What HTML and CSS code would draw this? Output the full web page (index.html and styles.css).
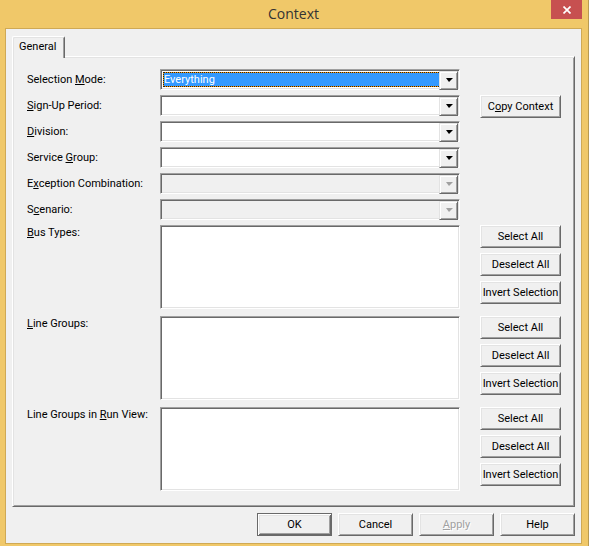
FILE: index.html
```html
<!DOCTYPE html>
<html lang="en">
<head>
    <meta charset="UTF-8">
    <meta name="viewport" content="width=device-width, initial-scale=1.0">
    <title>Context</title>
    <link rel="stylesheet" href="styles.css">
</head>
<body>
    <div class="window">
        <header class="titlebar">
            <h1>Context</h1>
            <button type="button" class="close" aria-label="Close">
                <svg width="8" height="8" viewBox="0 0 8 8"><path d="M0.5 0.5L7.5 7.5M7.5 0.5L0.5 7.5" stroke="#fff" stroke-width="1.7"/></svg>
            </button>
        </header>

        <form class="client">
            <div class="tabs" role="tablist">
                <button type="button" class="tab" role="tab" aria-selected="true">General</button>
            </div>

            <div class="panel" role="tabpanel">
                <div class="fields">
                    <label for="mode">Selection <u>M</u>ode:</label>
                    <div class="combo focused">
                        <select id="mode"><option>Everything</option></select>
                    </div>

                    <label for="period"><u>S</u>ign-Up Period:</label>
                    <div class="combo">
                        <select id="period"><option></option></select>
                    </div>
                    <button type="button" class="btn copy">C<u>o</u>py Context</button>

                    <label for="division"><u>D</u>ivision:</label>
                    <div class="combo">
                        <select id="division"><option></option></select>
                    </div>

                    <label for="service">Service <u>G</u>roup:</label>
                    <div class="combo">
                        <select id="service"><option></option></select>
                    </div>

                    <label for="exception">E<u>x</u>ception Combination:</label>
                    <div class="combo disabled">
                        <select id="exception" disabled><option></option></select>
                    </div>

                    <label for="scenario">S<u>c</u>enario:</label>
                    <div class="combo disabled">
                        <select id="scenario" disabled><option></option></select>
                    </div>
                </div>

                <div class="list-row">
                    <label for="busTypes"><u>B</u>us Types:</label>
                    <select id="busTypes" class="list" multiple></select>
                    <div class="actions">
                        <button type="button" class="btn">Select All</button>
                        <button type="button" class="btn">Deselect All</button>
                        <button type="button" class="btn">Invert Selection</button>
                    </div>
                </div>

                <div class="list-row">
                    <label for="lineGroups"><u>L</u>ine Groups:</label>
                    <select id="lineGroups" class="list" multiple></select>
                    <div class="actions">
                        <button type="button" class="btn">Select All</button>
                        <button type="button" class="btn">Deselect All</button>
                        <button type="button" class="btn">Invert Selection</button>
                    </div>
                </div>

                <div class="list-row">
                    <label for="runView">Line Groups in <u>R</u>un View:</label>
                    <select id="runView" class="list" multiple></select>
                    <div class="actions">
                        <button type="button" class="btn">Select All</button>
                        <button type="button" class="btn">Deselect All</button>
                        <button type="button" class="btn">Invert Selection</button>
                    </div>
                </div>
            </div>

            <div class="footer">
                <button type="submit" class="btn default">OK</button>
                <button type="button" class="btn">Cancel</button>
                <button type="button" class="btn" disabled><u>A</u>pply</button>
                <button type="button" class="btn">Help</button>
            </div>
        </form>
    </div>
</body>
</html>
```

FILE: styles.css
```css
* {
    box-sizing: border-box;
}

body {
    margin: 0;
    background-color: #f0c869;
    font-family: Roboto, "Liberation Sans", Arial, sans-serif;
    font-size: 11px;
    line-height: 14px;
    color: #000;
}

button, select {
    font: inherit;
    color: inherit;
    border-radius: 0;
}

u {
    text-underline-offset: 1px;
    text-decoration-thickness: 1px;
}

label {
    padding-top: 1px;
}

.window {
    min-height: 100vh;
    padding: 0 6px 2px 5px;
    border-right: 1px solid #b89a52;
}

/* title bar */
.titlebar {
    display: grid;
    grid-template-columns: 31px 1fr 31px;
    height: 28px;
}

.titlebar h1 {
    grid-column: 2;
    margin: 0;
    font-family: "Open Sans", "Noto Sans", sans-serif;
    font-size: 14px;
    font-weight: normal;
    line-height: 28px;
    text-align: center;
    color: #333;
}

.close {
    display: flex;
    align-items: center;
    justify-content: center;
    height: 19px;
    padding: 0;
    border: none;
    background-color: #c75050;
}

.client {
    padding: 7px 6px;
    border: 1px solid #cfa955;
    background-color: #f0f0f0;
}

/* tab strip */
.tabs {
    display: flex;
}

.tab {
    position: relative;
    z-index: 1;
    height: 22px;
    margin-bottom: -2px;
    padding: 0 8px 2px 6px;
    border: 1px solid #fff;
    border-right-color: #696969;
    border-bottom: none;
    border-radius: 2px 2px 0 0;
    background-color: #f0f0f0;
    box-shadow: inset 1px 1px #e3e3e3, inset -1px 0 #a0a0a0;
}

.panel {
    display: flex;
    flex-direction: column;
    gap: 7px;
    padding: 12px 13px 15px 14px;
    border: 1px solid;
    border-color: #fff #696969 #696969 #fff;
    box-shadow: inset 1px 1px #e3e3e3, inset -1px -1px #a0a0a0;
}

/* form rows */
.fields, .list-row {
    display: grid;
    grid-template-columns: 133px 1fr 81px;
}

.fields {
    grid-auto-rows: 21px;
    row-gap: 5px;
    align-items: center;
    margin-bottom: -2px;
}

.fields label {
    grid-column: 1;
}

.combo, .list {
    margin-right: 20px;
    border: 1px solid;
    border-color: #a0a0a0 #fff #fff #a0a0a0;
    background-color: #fff;
    box-shadow: inset 1px 1px #696969, inset -1px -1px #e3e3e3;
}

.combo {
    position: relative;
    grid-column: 2;
    height: 21px;
    padding: 2px 18px 2px 2px;
}

.combo select {
    display: block;
    width: 100%;
    height: 15px;
    padding: 0 1px;
    border: none;
    outline: none;
    background: none;
    appearance: none;
}

.combo.focused select {
    border: 1px dotted #222;
    padding: 0;
    line-height: 13px;
    background: linear-gradient(#39f, #39f) padding-box, #f90 border-box;
    color: #fff;
}

/* drop-down button */
.combo::before {
    content: "";
    position: absolute;
    top: 1px;
    right: 1px;
    width: 17px;
    height: 17px;
    border: 1px solid;
    border-color: #e3e3e3 #696969 #696969 #e3e3e3;
    background-color: #f0f0f0;
    box-shadow: inset 1px 1px #fff, inset -1px -1px #a0a0a0;
    pointer-events: none;
}

.combo::after {
    content: "";
    position: absolute;
    top: 8px;
    right: 6px;
    border: solid transparent;
    border-width: 4px 4px 0 3px;
    border-top-color: #000;
    pointer-events: none;
}

.combo.disabled {
    background-color: #f0f0f0;
}

.combo.disabled::after {
    border-top-color: #a0a0a0;
}

.list {
    height: 84px;
    padding: 0;
    outline: none;
}

.actions {
    display: flex;
    flex-direction: column;
    gap: 5px;
}

/* buttons */
.btn {
    height: 23px;
    padding: 0;
    border: 1px solid;
    border-color: #fff #696969 #696969 #fff;
    background-color: #f0f0f0;
    box-shadow: inset 1px 1px #e3e3e3, inset -1px -1px #a0a0a0;
    white-space: nowrap;
}

.btn:disabled {
    color: #a0a0a0;
    text-shadow: 1px 1px #fff;
}

.btn.default {
    border-color: #696969;
    box-shadow: inset 1px 1px #fff, inset -1px -1px #696969, inset 2px 2px #e3e3e3, inset -2px -2px #a0a0a0;
}

.copy {
    grid-column: 3;
    grid-row: 2 / span 2;
    align-self: start;
}

.footer {
    display: flex;
    justify-content: flex-end;
    gap: 6px;
    margin-top: 6px;
}

.footer .btn {
    width: 75px;
}
```
